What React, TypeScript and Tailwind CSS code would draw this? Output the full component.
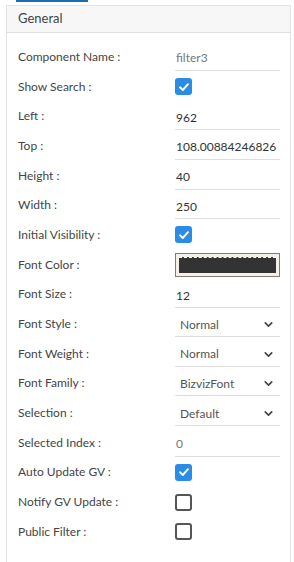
import { ChevronDown } from 'lucide-react';

type Row =
  | { label: string; kind: 'text'; value: string; muted?: boolean }
  | { label: string; kind: 'check'; checked: boolean }
  | { label: string; kind: 'select'; value: string }
  | { label: string; kind: 'color' };

const rows: Row[] = [
  { label: 'Component Name :', kind: 'text', value: 'filter3', muted: true },
  { label: 'Show Search :', kind: 'check', checked: true },
  { label: 'Left :', kind: 'text', value: '962' },
  { label: 'Top :', kind: 'text', value: '108.00884246826' },
  { label: 'Height :', kind: 'text', value: '40' },
  { label: 'Width :', kind: 'text', value: '250' },
  { label: 'Initial Visibility :', kind: 'check', checked: true },
  { label: 'Font Color :', kind: 'color' },
  { label: 'Font Size :', kind: 'text', value: '12' },
  { label: 'Font Style :', kind: 'select', value: 'Normal' },
  { label: 'Font Weight :', kind: 'select', value: 'Normal' },
  { label: 'Font Family :', kind: 'select', value: 'BizvizFont' },
  { label: 'Selection :', kind: 'select', value: 'Default' },
  { label: 'Selected Index :', kind: 'text', value: '0', muted: true },
  { label: 'Auto Update GV :', kind: 'check', checked: true },
  { label: 'Notify GV Update :', kind: 'check', checked: false },
  { label: 'Public Filter :', kind: 'check', checked: false },
];

function Checkbox({ checked }: { checked: boolean }) {
  if (checked) {
    return (
      <div className="w-[17px] h-[17px] rounded-[3px] bg-[#2b8ce6] flex items-center justify-center">
        <svg width="12" height="12" viewBox="0 0 12 12" fill="none">
          <path d="M2 6.3 L4.8 9 L10 3.2" stroke="white" strokeWidth="1.9" strokeLinecap="round" strokeLinejoin="round" />
        </svg>
      </div>
    );
  }
  return <div className="w-[17px] h-[17px] rounded-[3px] border-2 border-[#555] bg-white" />;
}

function Field({ row }: { row: Row }) {
  if (row.kind === 'check') return <Checkbox checked={row.checked} />;
  if (row.kind === 'color') {
    return (
      <div className="w-[105px] h-[24px] border border-[#8a786a] bg-[#f4efe9] p-[3px]">
        <div className="w-full h-full bg-[#333] border-t border-dashed border-white" />
      </div>
    );
  }
  if (row.kind === 'select') {
    return (
      <div className="w-[105px] h-[24px] border-b border-[#ddd] flex items-center justify-between pl-[5px] pr-[5px] mt-[2px]">
        <span className="text-[#555]">{row.value}</span>
        <ChevronDown size={13} strokeWidth={3} className="text-[#444]" />
      </div>
    );
  }
  return (
    <div className="w-[105px] h-[24px] border-b border-[#ddd] flex items-center pl-[1px] mt-[4px]">
      <span className={row.muted ? 'text-[#777]' : 'text-[#333]'}>{row.value}</span>
    </div>
  );
}

export default function App() {
  return (
    <div className="w-[294px] h-[562px] bg-white overflow-hidden relative text-[12px]" style={{ fontFamily: 'Lato, "Open Sans", sans-serif' }}>
      <div className="absolute left-[16px] top-0 w-[72px] h-[2px] bg-[#1b6cb0]" />
      <div className="ml-[6px] mr-[3px] mt-[5px] border border-[#e3e3e3] h-[600px]">
        <div className="h-[27px] bg-[#f7f7f7] border-b border-[#e0e0e0] flex items-center pl-[11px] text-[13px] text-[#444]">
          General
        </div>
        <div className="pt-[9px]">
          {rows.map((row) => (
            <div key={row.label} className="h-[29.7px] flex items-center pl-[11px]">
              <div className="w-[157px] text-[#444]">{row.label}</div>
              <Field row={row} />
            </div>
          ))}
        </div>
      </div>
    </div>
  );
}
